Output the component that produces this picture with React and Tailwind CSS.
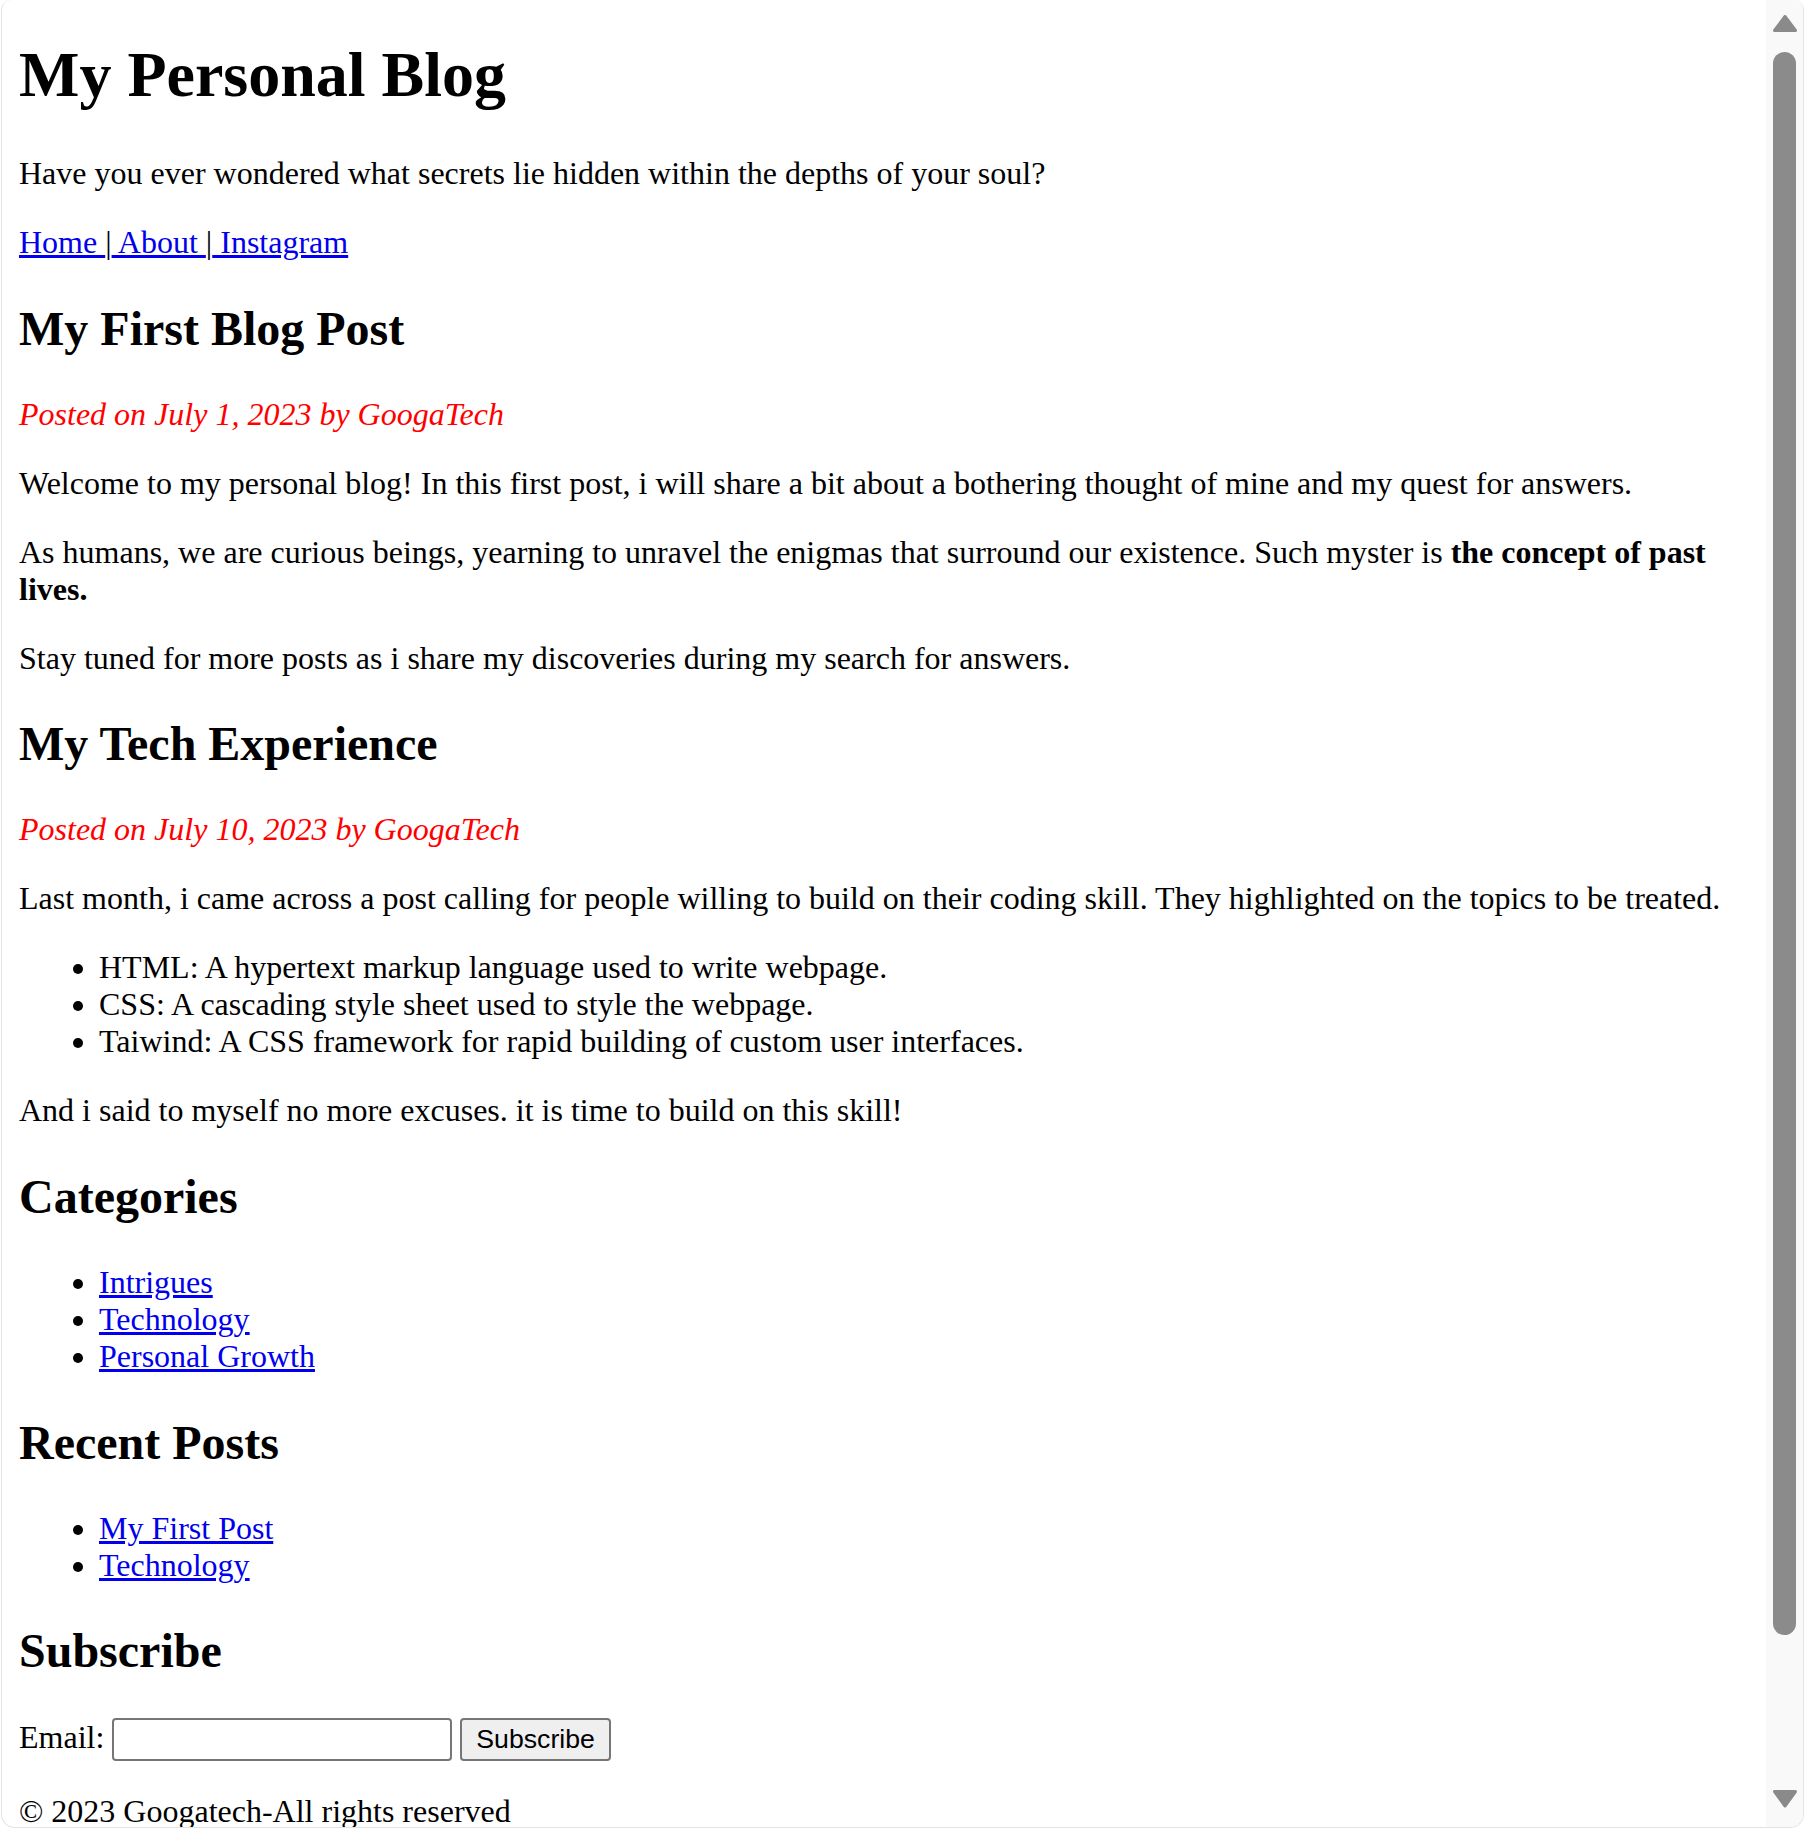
import React from "react";

function Scrollbar() {
  return (
    <div className="w-[37px] shrink-0 bg-[#f9f9f9] flex flex-col items-center pt-[15px] pb-[19px]">
      <svg width="24" height="17" viewBox="0 0 24 17" className="block">
        <polygon points="12,1.5 22.5,15.5 1.5,15.5" fill="#8a8a8a" stroke="#8a8a8a" strokeWidth="3" strokeLinejoin="round" />
      </svg>
      <div className="mt-[20px] w-[23px] h-[1583px] rounded-full bg-[#8b8b8b]" />
      <div className="flex-1" />
      <svg width="24" height="18" viewBox="0 0 24 18" className="block">
        <polygon points="1.5,1.5 22.5,1.5 12,16" fill="#8a8a8a" stroke="#8a8a8a" strokeWidth="3" strokeLinejoin="round" />
      </svg>
    </div>
  );
}

export default function App() {
  const link = "text-[#0000ee] underline";
  return (
    <div className="w-[1810px] h-[1830px] bg-white overflow-hidden">
      <div className="ml-[1px] w-[1803px] h-[1828px] border-l border-r border-b border-[#e3e3e3] rounded-tl-[10px] rounded-tr-[10px] rounded-bl-[14px] rounded-br-[14px] overflow-hidden flex bg-white">
        <div className="flex-1 min-w-0 pl-[17px] pr-[16px] font-['Liberation_Serif',serif] text-[32px] leading-[normal] text-black">
          <h1 className="text-[64px] font-bold leading-[normal] mt-[38px] mb-[42.88px]">My Personal Blog</h1>
          <p className="my-[32px]">Have you ever wondered what secrets lie hidden within the depths of your soul?</p>
          <p className="my-[32px]">
            <a className={link} href="#">Home </a>|<a className={link} href="#"> About </a>|<a className={link} href="#"> Instagram</a>
          </p>

          <h2 className="text-[48px] font-bold leading-[normal] my-[39.84px]">My First Blog Post</h2>
          <p className="my-[32px] italic text-[#ff0000]">Posted on July 1, 2023 by GoogaTech</p>
          <p className="my-[32px]">Welcome to my personal blog! In this first post, i will share a bit about a bothering thought of mine and my quest for answers.</p>
          <p className="my-[32px]">
            As humans, we are curious beings, yearning to unravel the enigmas that surround our existence. Such myster is <strong className="font-bold">the concept of past lives.</strong>
          </p>
          <p className="my-[32px]">Stay tuned for more posts as i share my discoveries during my search for answers.</p>

          <h2 className="text-[48px] font-bold leading-[normal] my-[39.84px]">My Tech Experience</h2>
          <p className="my-[32px] italic text-[#ff0000]">Posted on July 10, 2023 by GoogaTech</p>
          <p className="my-[32px]">Last month, i came across a post calling for people willing to build on their coding skill. They highlighted on the topics to be treated.</p>
          <ul className="my-[32px] pl-[80px] list-disc">
            <li>HTML: A hypertext markup language used to write webpage.</li>
            <li>CSS: A cascading style sheet used to style the webpage.</li>
            <li>Taiwind: A CSS framework for rapid building of custom user interfaces.</li>
          </ul>
          <p className="my-[32px]">And i said to myself no more excuses. it is time to build on this skill!</p>

          <h2 className="text-[48px] font-bold leading-[normal] my-[39.84px]">Categories</h2>
          <ul className="my-[32px] pl-[80px] list-disc">
            <li><a className={link} href="#">Intrigues</a></li>
            <li><a className={link} href="#">Technology</a></li>
            <li><a className={link} href="#">Personal Growth</a></li>
          </ul>

          <h2 className="text-[48px] font-bold leading-[normal] my-[39.84px]">Recent Posts</h2>
          <ul className="my-[32px] pl-[80px] list-disc">
            <li><a className={link} href="#">My First Post</a></li>
            <li><a className={link} href="#">Technology</a></li>
          </ul>

          <h2 className="text-[48px] font-bold leading-[normal] my-[39.84px]">Subscribe</h2>
          <form className="my-[32px]" onSubmit={(e) => e.preventDefault()}>
            <label>Email:</label>{" "}
            <input
              type="email"
              className="inline-block align-baseline w-[340px] h-[43px] px-[4px] border-2 border-[#767676] rounded-[4px] bg-white font-['Liberation_Sans',sans-serif] text-[26.67px]"
            />{" "}
            <button
              type="submit"
              className="inline-block align-baseline h-[43px] px-[14px] border-2 border-[#767676] rounded-[4px] bg-[#efefef] text-black font-['Liberation_Sans',sans-serif] text-[26.67px] leading-[normal]"
            >
              Subscribe
            </button>
          </form>
          <footer>
            <p className="my-[32px]">© 2023 Googatech-All rights reserved</p>
          </footer>
        </div>
        <Scrollbar />
      </div>
    </div>
  );
}
